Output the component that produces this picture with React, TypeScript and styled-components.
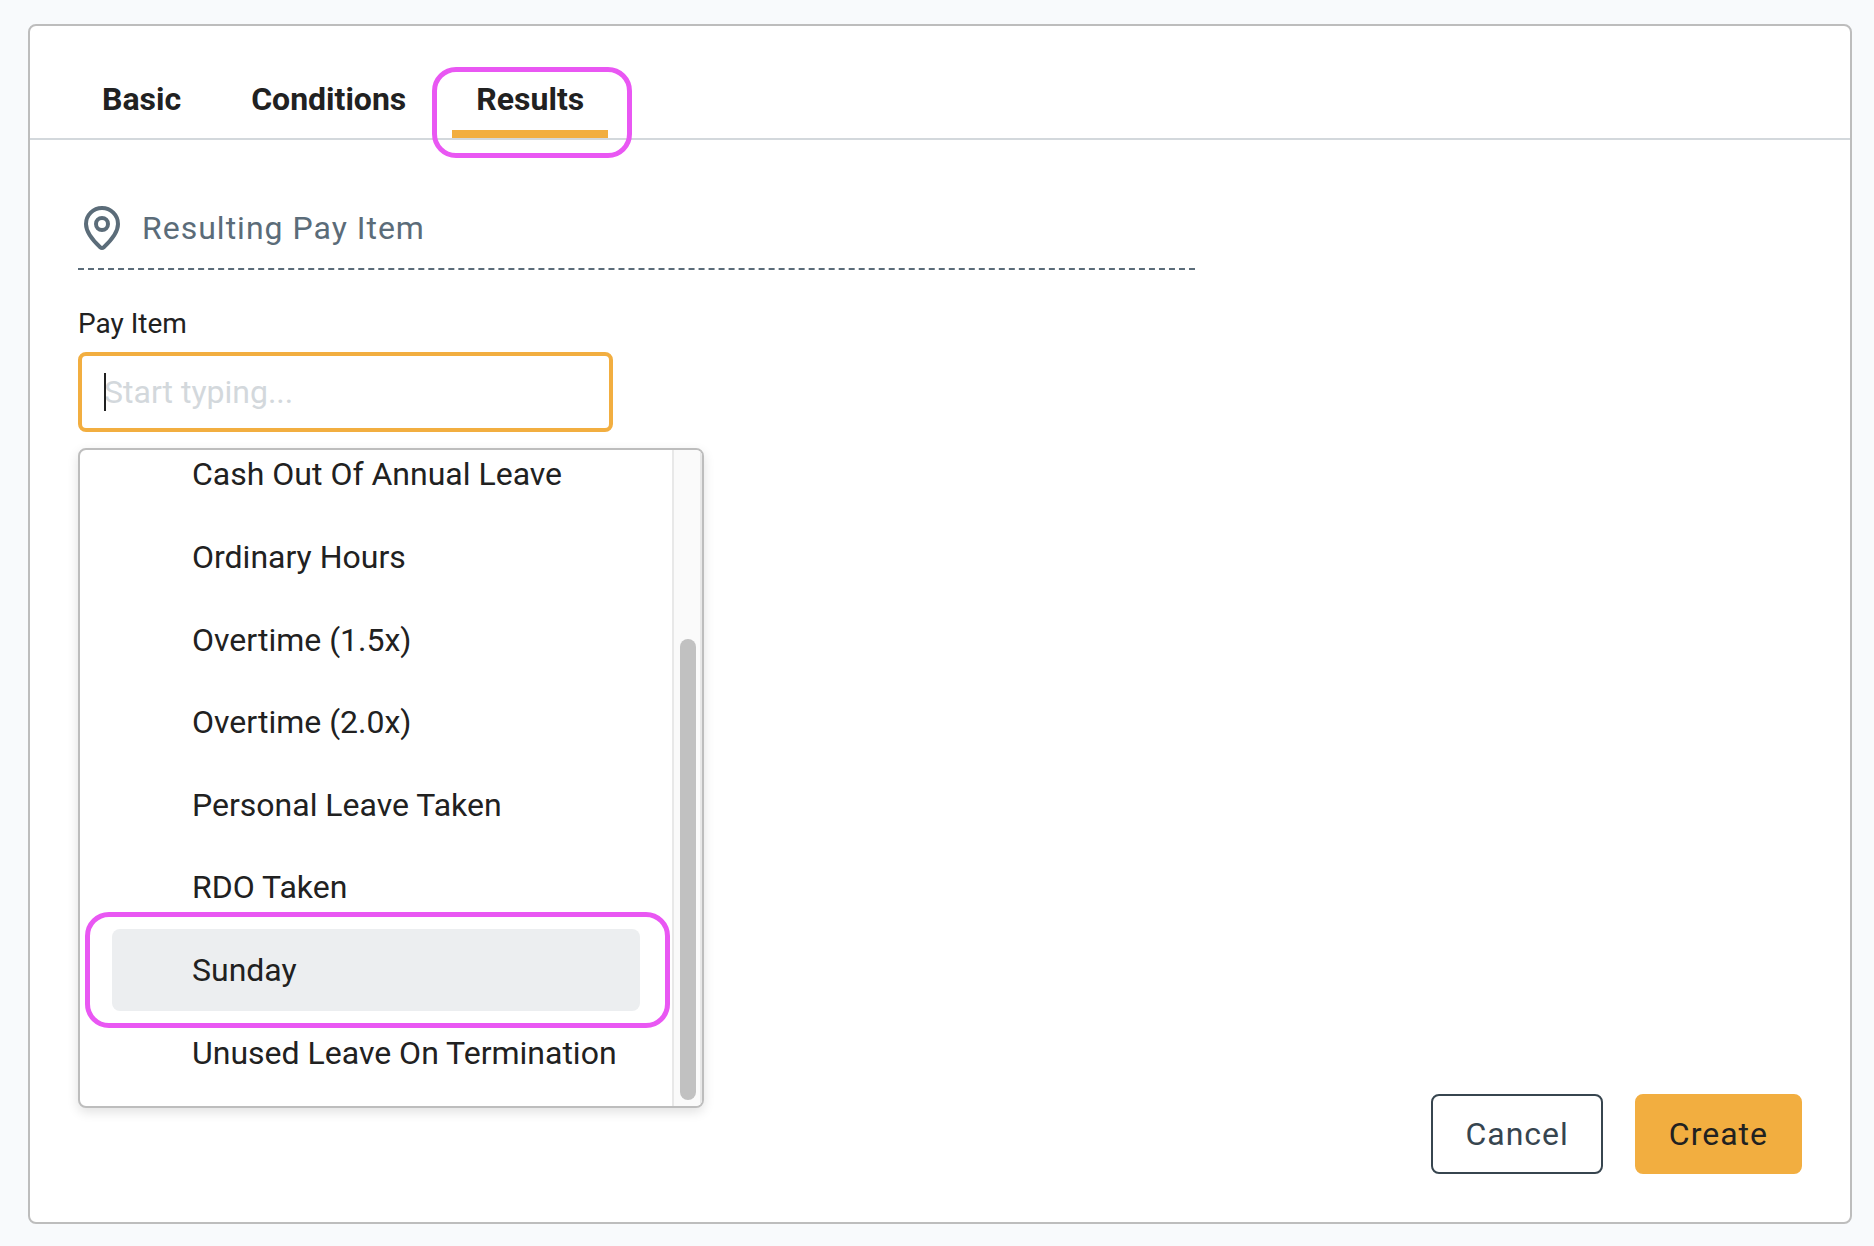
import React, { useState } from "react";
import styled, { createGlobalStyle } from "styled-components";

const GlobalStyle = createGlobalStyle`
  *, *::before, *::after { box-sizing: border-box; }
  body {
    margin: 0;
    background: #f8fafc;
    color: #212121;
    font-family: Roboto, "Liberation Sans", sans-serif;
    font-size: 32px;
    line-height: 38px;
  }
  button, input { font: inherit; color: inherit; }
`;

const Page = styled.div`
  display: flex;
  min-height: 100vh;
  padding: 24px 22px 22px 28px;
`;

const Card = styled.main`
  flex: 1;
  min-width: 0;
  display: flex;
  flex-direction: column;
  background: #fff;
  border: 2px solid #bdbdbd;
  border-radius: 8px;
`;

const TabBar = styled.nav`
  display: flex;
  gap: 22px;
  padding: 40px 48px 0;
  border-bottom: 2px solid #d3d8dc;
`;

const Tab = styled.button<{ $active: boolean }>`
  position: relative;
  padding: 14px 24px 12px;
  border: 0;
  border-bottom: 8px solid ${(p) => (p.$active ? "#f2ae40" : "transparent")};
  background: none;
  font-weight: 700;
  cursor: pointer;
`;

const Callout = styled.span<{ $inset: string }>`
  position: absolute;
  inset: ${(p) => p.$inset};
  border: 5px solid #e957f3;
  border-radius: 24px;
  pointer-events: none;
`;

const Body = styled.section`
  padding: 62px 48px 0;
`;

const SectionHeading = styled.h2`
  display: flex;
  align-items: center;
  gap: 16px;
  max-width: 1117px;
  margin: 0 0 36px;
  padding-bottom: 14px;
  border-bottom: 2px dashed #5b6c79;
  color: #5b6c79;
  font-size: 32px;
  font-weight: 400;
  letter-spacing: 1px;
`;

const PinIcon = styled.svg`
  width: 48px;
  height: 52px;
  flex: none;
`;

const Field = styled.div`
  display: flex;
  flex-direction: column;
  gap: 10px;
  max-width: 535px;
`;

const Label = styled.label`
  font-size: 28px;
  line-height: 36px;
`;

const Combo = styled.div`
  position: relative;
`;

const TextInput = styled.input`
  display: block;
  width: 100%;
  height: 80px;
  padding: 0 22px;
  border: 4px solid #f2ae40;
  border-radius: 8px;
  background: #fff;
  outline: none;
  caret-color: transparent;
  &::placeholder { color: #d3d8dc; opacity: 1; }
`;

const Caret = styled.span`
  position: absolute;
  left: 26px;
  top: 21px;
  width: 2px;
  height: 38px;
  background: #212121;
`;

const Dropdown = styled.div`
  position: absolute;
  top: calc(100% + 16px);
  left: 0;
  z-index: 1;
  display: flex;
  width: 626px;
  height: 660px;
  overflow: hidden;
  background: #fff;
  border: 2px solid #bdbdbd;
  border-radius: 8px;
  box-shadow: 0 4px 12px rgba(0, 0, 0, 0.12);
`;

const Viewport = styled.div`
  flex: 1;
  min-width: 0;
  display: flex;
  flex-direction: column;
  justify-content: flex-end;
  padding: 0 32px 12px;
`;

const Options = styled.ul`
  flex: none;
  display: grid;
  grid-template-columns: minmax(0, 1fr);
  grid-auto-rows: 1fr;
  height: 661px;
  margin: 0;
  padding: 0;
  list-style: none;
`;

const Option = styled.li<{ $active: boolean }>`
  position: relative;
  display: flex;
  align-items: center;
  padding-left: 80px;
  border-radius: 8px;
  background: ${(p) => (p.$active ? "#eceef0" : "transparent")};
  white-space: nowrap;
  cursor: pointer;
`;

const Track = styled.div`
  flex: none;
  display: flex;
  align-items: flex-end;
  width: 30px;
  padding: 6px;
  border: solid #e8e8e8;
  border-width: 0 2px;
  background: #fafafa;
`;

const Thumb = styled.div`
  flex: none;
  width: 16px;
  height: 461px;
  border-radius: 8px;
  background: #c1c1c1;
`;

const Footer = styled.footer`
  display: flex;
  justify-content: flex-end;
  gap: 32px;
  margin-top: auto;
  padding: 48px;
`;

const Action = styled.button<{ $primary?: boolean }>`
  height: 80px;
  padding: 0 32px;
  border: 2px solid ${(p) => (p.$primary ? "#f2ae40" : "#37454f")};
  border-radius: 8px;
  background: ${(p) => (p.$primary ? "#f2ae40" : "#fff")};
  color: ${(p) => (p.$primary ? "#212121" : "#37454f")};
  letter-spacing: 1px;
  cursor: pointer;
`;

const tabs = ["Basic", "Conditions", "Results"];

const payItems = [
  "Cash Out Of Annual Leave",
  "Ordinary Hours",
  "Overtime (1.5x)",
  "Overtime (2.0x)",
  "Personal Leave Taken",
  "RDO Taken",
  "Sunday",
  "Unused Leave On Termination",
];

export default function App() {
  const [tab, setTab] = useState("Results");
  const [query, setQuery] = useState("");

  return (
    <>
      <GlobalStyle />
      <Page>
        <Card>
          <TabBar>
            {tabs.map((name) => (
              <Tab key={name} type="button" $active={name === tab} onClick={() => setTab(name)}>
                {name}
                {name === "Results" && <Callout $inset="1px -24px -28px -20px" />}
              </Tab>
            ))}
          </TabBar>
          <Body>
            <SectionHeading>
              <PinIcon viewBox="0 0 48 52" fill="none" stroke="currentColor" strokeWidth="4" aria-hidden="true">
                <path
                  d="M24 6C15.200 6 8 13.200 8 22c0 8.500 7 16.500 14.200 23.200a2.700 2.700 0 0 0 3.600 0C33 38.500 40 30.500 40 22 40 13.200 32.800 6 24 6Z"
                  strokeLinejoin="round"
                />
                <circle cx="24" cy="22" r="6" />
              </PinIcon>
              Resulting Pay Item
            </SectionHeading>
            <Field>
              <Label htmlFor="pay-item">Pay Item</Label>
              <Combo>
                <TextInput
                  id="pay-item"
                  type="text"
                  role="combobox"
                  aria-expanded="true"
                  aria-controls="pay-item-options"
                  placeholder="Start typing..."
                  value={query}
                  onChange={(e) => setQuery(e.target.value)}
                />
                <Caret />
                <Dropdown>
                  <Viewport>
                    <Options id="pay-item-options" role="listbox">
                      {payItems.map((item) => (
                        <Option key={item} role="option" aria-selected={item === "Sunday"} $active={item === "Sunday"}>
                          {item}
                          {item === "Sunday" && <Callout $inset="-17px -30px -17px -27px" />}
                        </Option>
                      ))}
                    </Options>
                  </Viewport>
                  <Track>
                    <Thumb />
                  </Track>
                </Dropdown>
              </Combo>
            </Field>
          </Body>
          <Footer>
            <Action type="button">Cancel</Action>
            <Action type="button" $primary>
              Create
            </Action>
          </Footer>
        </Card>
      </Page>
    </>
  );
}
